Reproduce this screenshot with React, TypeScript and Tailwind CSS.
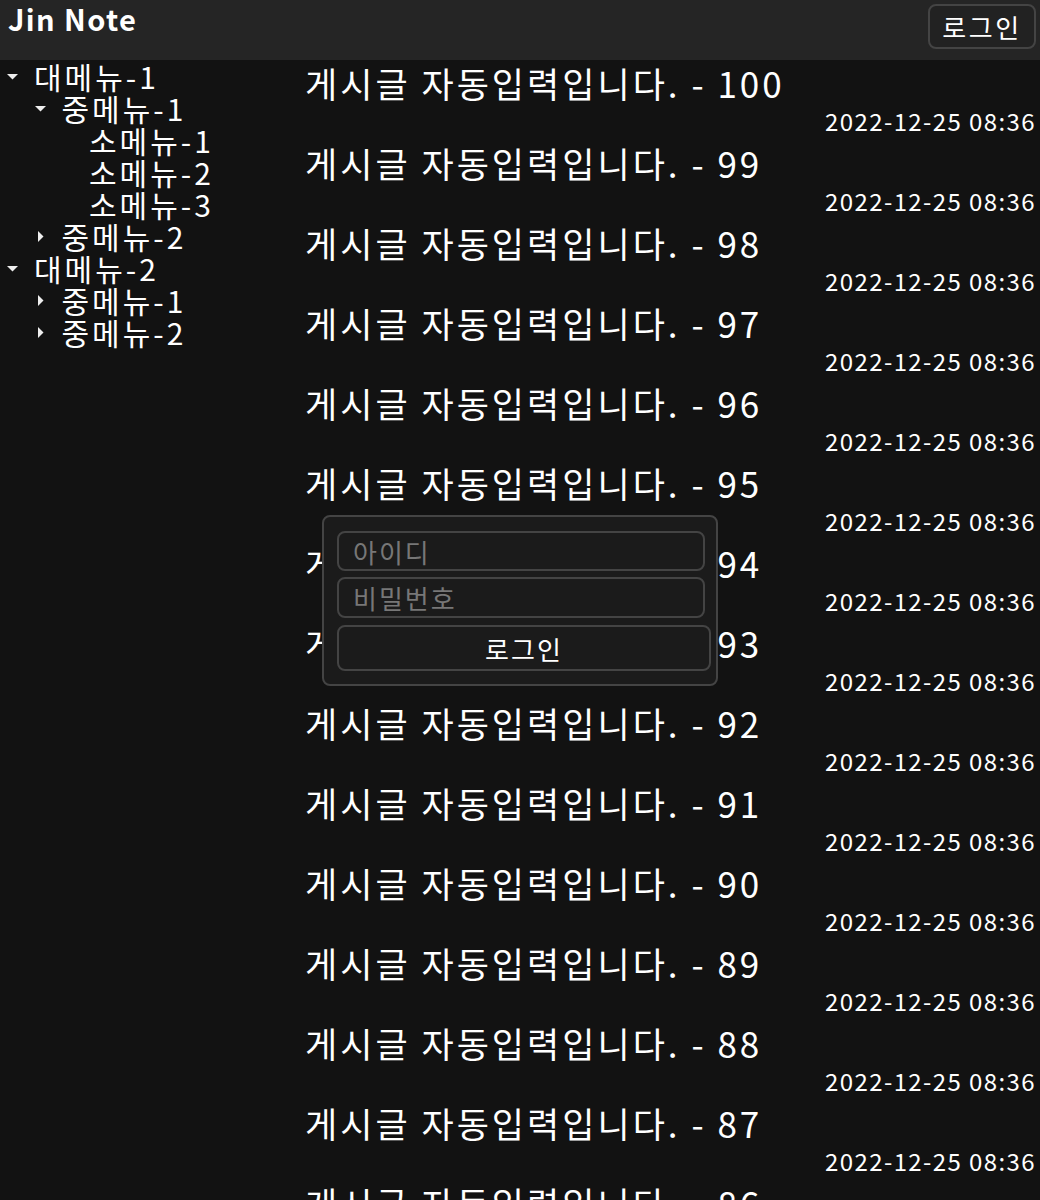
import React from "react";

type Node = { label: string; open?: boolean; children?: Node[] };

const tree: Node[] = [
  {
    label: "대메뉴-1",
    open: true,
    children: [
      {
        label: "중메뉴-1",
        open: true,
        children: [{ label: "소메뉴-1" }, { label: "소메뉴-2" }, { label: "소메뉴-3" }],
      },
      { label: "중메뉴-2", children: [{ label: "소메뉴-1" }] },
    ],
  },
  {
    label: "대메뉴-2",
    open: true,
    children: [
      { label: "중메뉴-1", children: [{ label: "소메뉴-1" }] },
      { label: "중메뉴-2", children: [{ label: "소메뉴-1" }] },
    ],
  },
];

const posts = Array.from({ length: 15 }, (_, i) => 100 - i);

function Caret({ open }: { open?: boolean }) {
  return (
    <svg width="34" height="32" viewBox="0 0 34 32" className="shrink-0">
      {open ? (
        <path d="M7 14h11l-5.5 5.5z" fill="#eee" />
      ) : (
        <path d="M10 11v11l5.5-5.5z" fill="#eee" />
      )}
    </svg>
  );
}

function TreeItem({ node, depth }: { node: Node; depth: number }) {
  const hasKids = !!node.children?.length;
  return (
    <li>
      <div className="flex items-center h-8" style={{ paddingLeft: depth * 27.5 }}>
        {hasKids ? <Caret open={node.open} /> : <span className="w-[34px] shrink-0" />}
        <span className="text-[30px] tracking-[3px] leading-8 whitespace-nowrap">{node.label}</span>
      </div>
      {hasKids && node.open && (
        <ul>
          {node.children!.map((c, i) => (
            <TreeItem key={i} node={c} depth={depth + 1} />
          ))}
        </ul>
      )}
    </li>
  );
}

export default function App() {
  return (
    <div
      className="relative h-[1200px] overflow-hidden bg-[#121212] text-white"
      style={{ fontFamily: '"Noto Sans CJK KR", "Noto Sans", sans-serif' }}>
      {/* 헤더 */}
      <header className="h-[60px] bg-[#252525] flex justify-between items-start px-2">
        <h1 className="text-[29px] font-bold tracking-[1.4px] leading-[36px]">Jin Note</h1>
        <button className="mt-1 w-[108px] h-[45px] border-2 border-[#444] rounded-lg bg-[#222] text-[26px] tracking-[2.5px] leading-none -mr-1">
          로그인
        </button>
      </header>

      <div className="flex">
        {/* 메뉴 트리 */}
        <nav className="w-[300px] shrink-0">
          <ul>
            {tree.map((n, i) => (
              <TreeItem key={i} node={n} depth={0} />
            ))}
          </ul>
        </nav>

        {/* 게시글 목록 */}
        <main className="flex-1 pt-[3px] pr-1 pl-[5px]">
          {posts.map((n) => (
            <div key={n} className="mb-1">
              <div className="text-[35px] tracking-[3px] leading-[40px] whitespace-nowrap">
                게시글 자동입력입니다. - {n}
              </div>
              <div className="text-right text-[24px] tracking-[1.4px] leading-[36px]">2022-12-25 08:36</div>
            </div>
          ))}
        </main>
      </div>

      {/* 로그인 팝업 */}
      <div className="absolute left-[322px] top-[515px] w-[396px] h-[171px] bg-[#1b1b1b] border-2 border-[#444] rounded-lg pt-[14px] px-[13px]">
        <div className="flex flex-col gap-[6px]">
          <input
            placeholder="아이디"
            className="w-[368px] h-[40px] rounded-lg border-2 border-[#444] bg-[#1b1b1b] px-[14px] text-[26px] tracking-[2px] text-white placeholder:text-[#777] outline-none"
          />
          <input
            type="text"
            placeholder="비밀번호"
            className="w-[368px] h-[41px] rounded-lg border-2 border-[#444] bg-[#1b1b1b] px-[14px] text-[26px] tracking-[2px] text-white placeholder:text-[#777] outline-none"
          />
          <button className="mt-px w-[374px] h-[46px] rounded-lg border-2 border-[#444] bg-[#1b1b1b] text-[26px] tracking-[2px] text-white">
            로그인
          </button>
        </div>
      </div>
    </div>
  );
}
